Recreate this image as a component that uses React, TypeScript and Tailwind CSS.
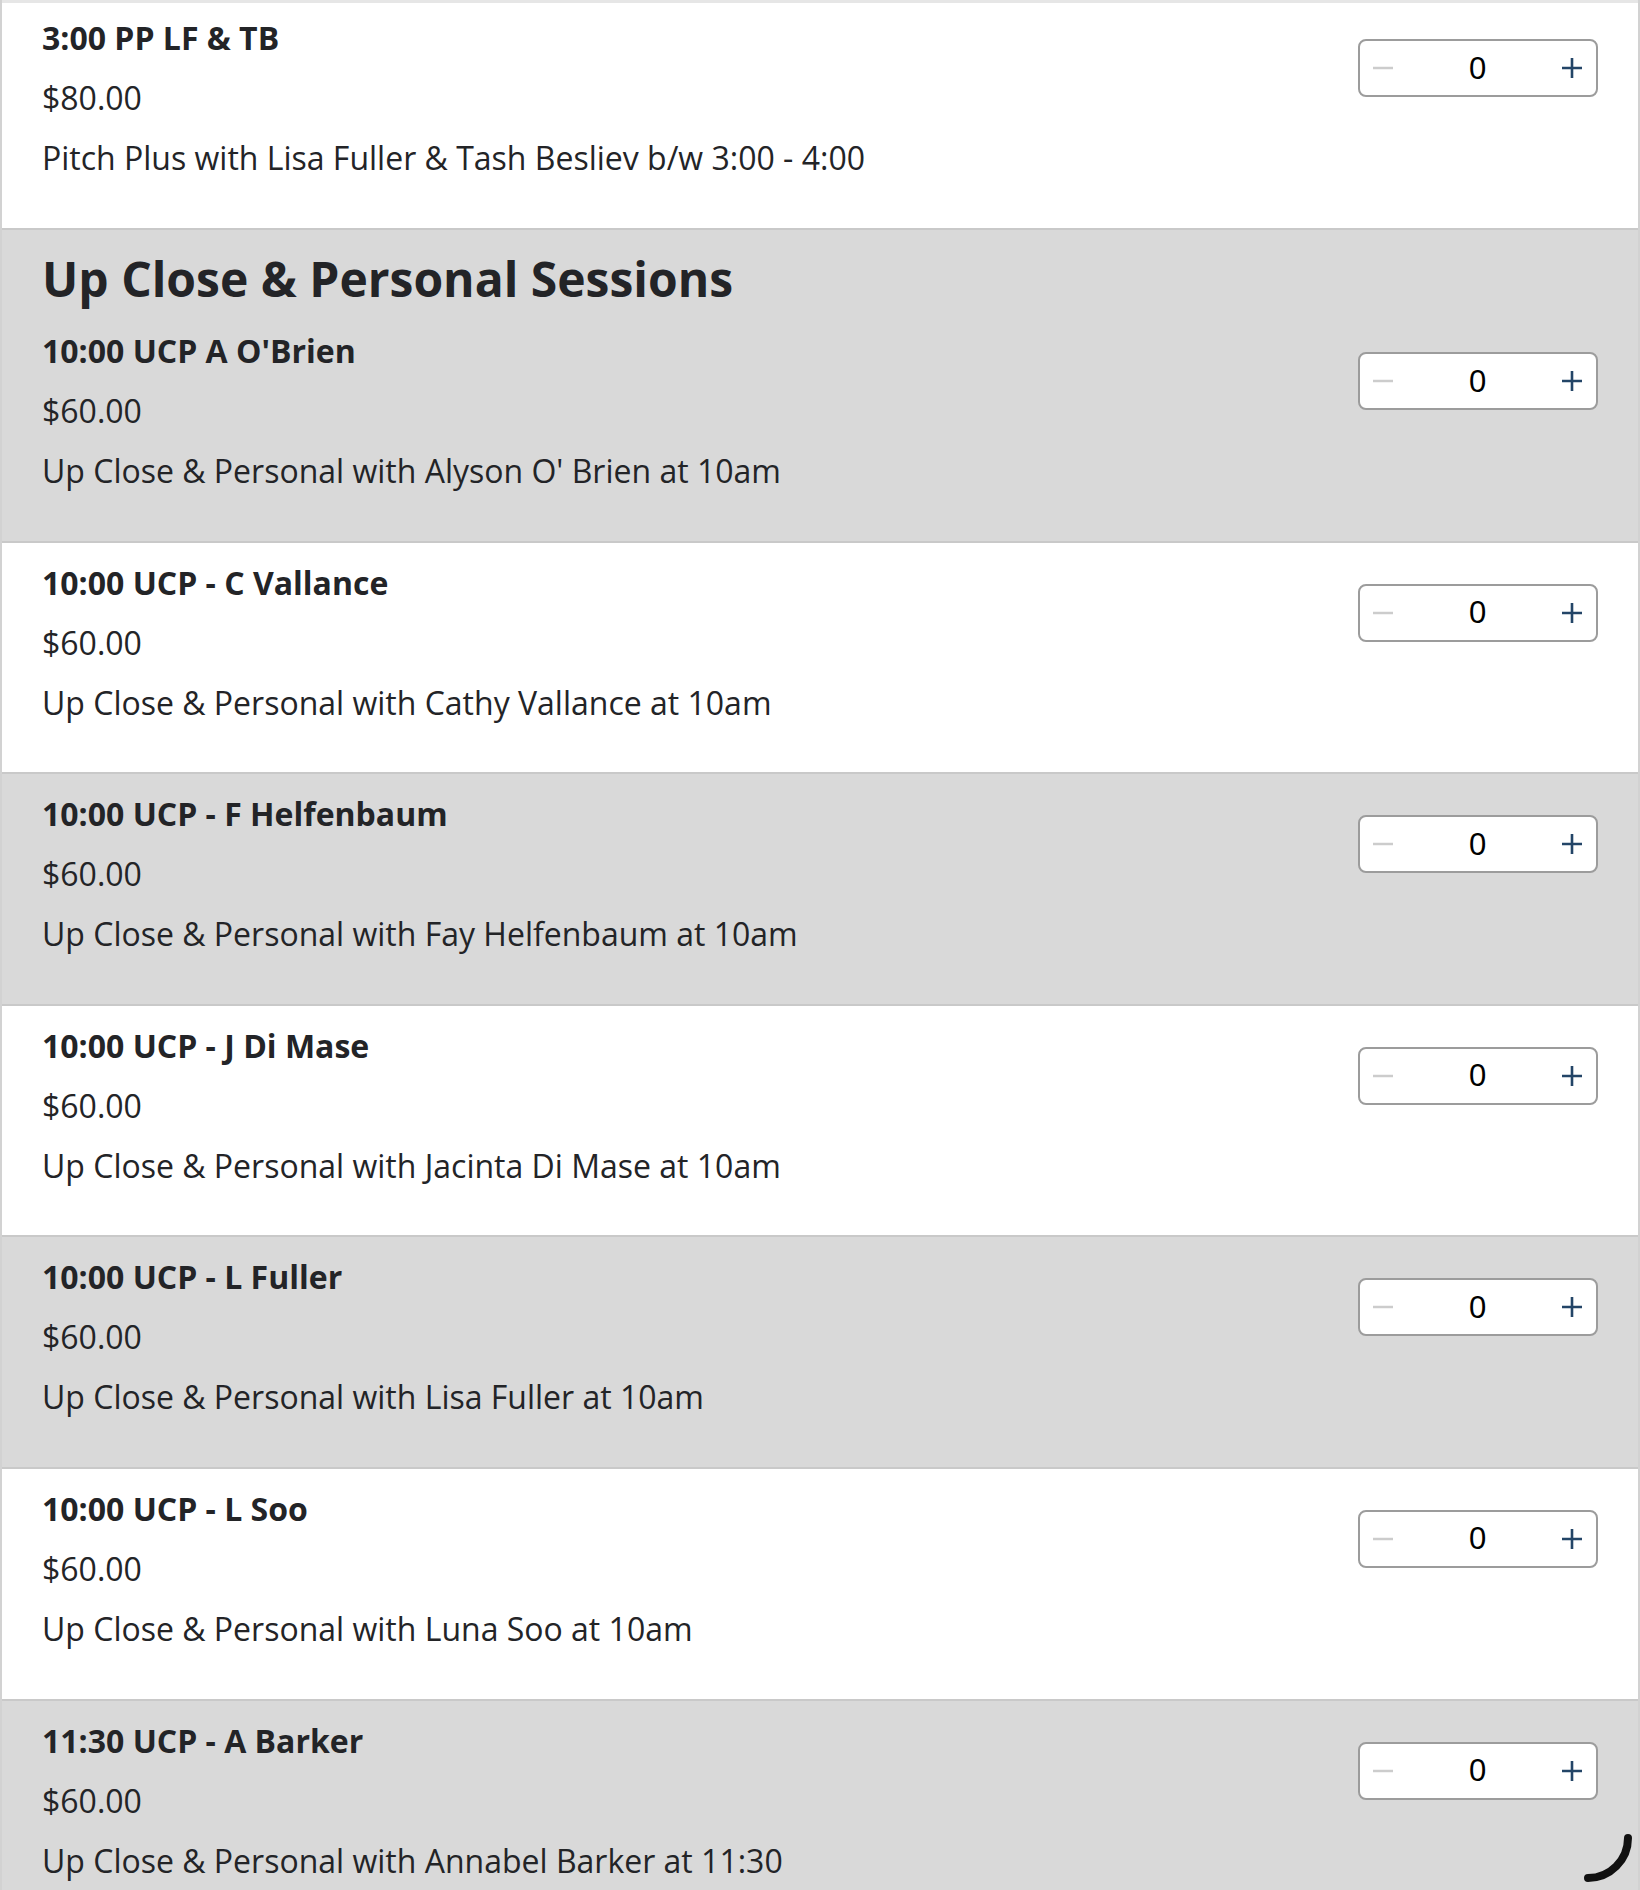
import React from 'react'

type Item = { title: string; price: string; desc: string }

const SESSIONS: Item[] = [
  { title: "10:00 UCP A O'Brien", price: '$60.00', desc: "Up Close & Personal with Alyson O' Brien at 10am" },
  { title: '10:00 UCP - C Vallance', price: '$60.00', desc: 'Up Close & Personal with Cathy Vallance at 10am' },
  { title: '10:00 UCP - F Helfenbaum', price: '$60.00', desc: 'Up Close & Personal with Fay Helfenbaum at 10am' },
  { title: '10:00 UCP - J Di Mase', price: '$60.00', desc: 'Up Close & Personal with Jacinta Di Mase at 10am' },
  { title: '10:00 UCP - L Fuller', price: '$60.00', desc: 'Up Close & Personal with Lisa Fuller at 10am' },
  { title: '10:00 UCP - L Soo', price: '$60.00', desc: 'Up Close & Personal with Luna Soo at 10am' },
  { title: '11:30 UCP - A Barker', price: '$60.00', desc: 'Up Close & Personal with Annabel Barker at 11:30' },
]

function Stepper() {
  return (
    <div className="mt-[31px] flex h-[58px] w-[240px] shrink-0 items-center justify-between rounded-lg border-2 border-[#9c9c9c] bg-white pl-[13px] pr-[14px]">
      <svg width="20" height="20" viewBox="0 0 20 20">
        <path d="M0 10 H20" stroke="#cccccc" strokeWidth="2.5" />
      </svg>
      <span className="text-[31px] leading-none text-black" style={{ fontFamily: '"Liberation Sans", Arial, sans-serif' }}>
        0
      </span>
      <svg width="20" height="20" viewBox="0 0 20 20">
        <path d="M0 10 H20 M10 0 V20" stroke="#234567" strokeWidth="2.6" />
      </svg>
    </div>
  )
}

function ItemBody({ item }: { item: Item }) {
  return (
    <div className="flex justify-between">
      <div className="text-[32px] leading-[60px] text-[#232427]">
        <div className="font-bold">{item.title}</div>
        <div>{item.price}</div>
        <div>{item.desc}</div>
      </div>
      <Stepper />
    </div>
  )
}

export default function App() {
  return (
    <div className="relative h-[1890px] overflow-hidden bg-white" style={{ fontFamily: '"Open Sans", sans-serif' }}>
      <div className="border-x-2 border-[#d2d2d2]">
        {/* previous section tail */}
        <div className="border-t-[3px] border-[#e6e6e6] bg-white px-10 pb-[40px] pt-[5px]">
          <ItemBody item={{ title: '3:00 PP LF & TB', price: '$80.00', desc: 'Pitch Plus with Lisa Fuller & Tash Besliev b/w 3:00 - 4:00' }} />
        </div>

        {SESSIONS.map((s, i) => (
          <div
            key={s.title}
            className={`border-t-2 border-[#c9c9c9] px-10 pb-[39.6px] ${i % 2 === 0 ? 'bg-[#d9d9d9]' : 'bg-white'} ${i === 0 ? 'pt-0' : 'pt-[10px]'}`}
          >
            {i === 0 && (
              <h2 className="mb-[12px] pt-[19px] text-[48px] font-bold leading-[60px] text-[#232427]">
                Up Close &amp; Personal Sessions
              </h2>
            )}
            <ItemBody item={s} />
          </div>
        ))}
      </div>

      {/* loading spinner */}
      <svg className="absolute left-[1540px] top-[1790px]" width="100" height="100" viewBox="0 0 100 100">
        <path d="M88 48 A40 40 0 0 1 48 88" fill="none" stroke="#111" strokeWidth="8" strokeLinecap="round" />
      </svg>
    </div>
  )
}
